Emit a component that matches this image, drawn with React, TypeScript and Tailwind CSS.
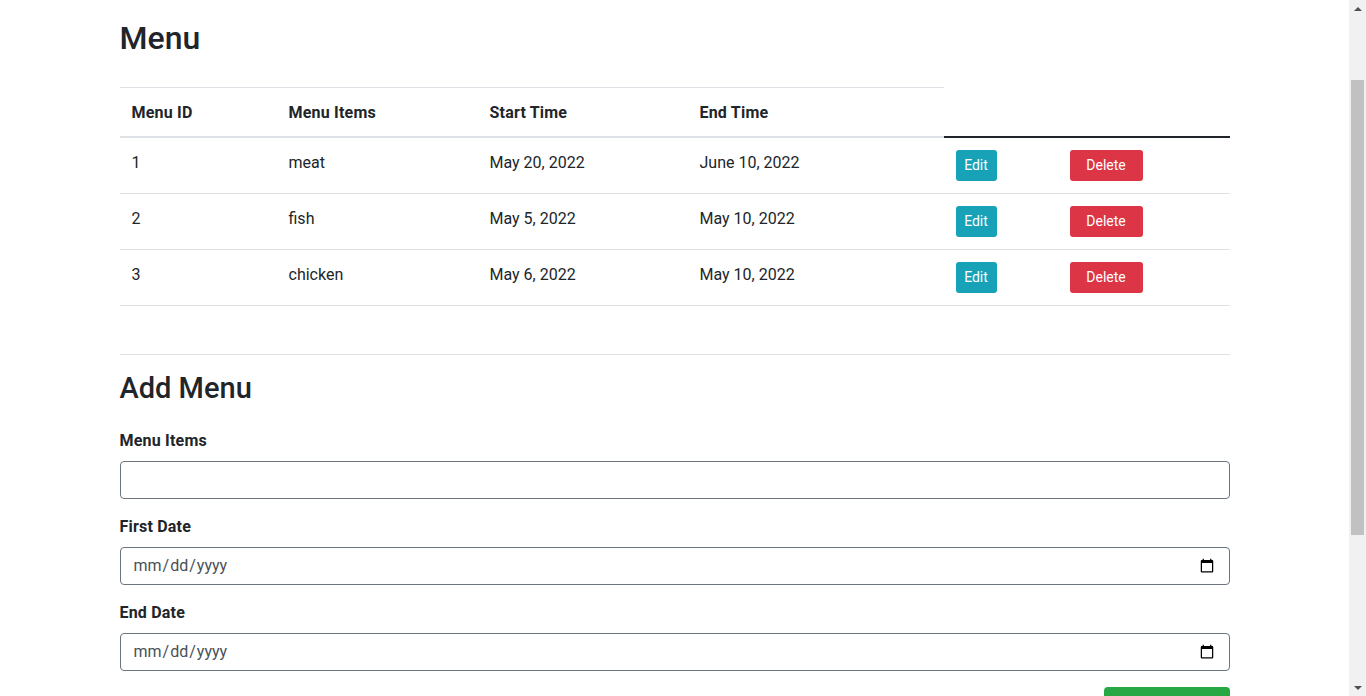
const MENUS = [
  { id: 1, item: "meat", start: "May 20, 2022", end: "June 10, 2022" },
  { id: 2, item: "fish", start: "May 5, 2022", end: "May 10, 2022" },
  { id: 3, item: "chicken", start: "May 6, 2022", end: "May 10, 2022" },
];

function Scrollbar() {
  return (
    <div className="flex h-full w-[17px] shrink-0 flex-col items-center bg-[#f1f1f1]">
      <div className="flex h-[17px] items-center justify-center">
        <div className="h-0 w-0 border-x-[4px] border-b-[4px] border-x-transparent border-b-[#505050]" />
      </div>
      <div className="h-[63px]" />
      <div className="h-[455px] w-[13px] bg-[#c1c1c1]" />
      <div className="flex-1" />
      <div className="flex h-[17px] items-center justify-center">
        <div className="h-0 w-0 border-x-[4px] border-t-[4px] border-x-transparent border-t-[#505050]" />
      </div>
    </div>
  );
}

export default function App() {
  const cell = "border-b border-[#dee2e6] px-3 pt-[13px] pb-[11px] align-top";

  return (
    <div className="flex h-screen overflow-hidden bg-white text-[#212529] font-['Segoe_UI',Roboto,'Liberation_Sans',sans-serif] text-[16px] leading-[1.5]">
      <div className="min-w-0 flex-1 overflow-hidden">
        <div className="mx-auto max-w-[1140px] px-[15px]">
          <h2 className="mt-[19px] mb-[30px] text-[32px] font-medium leading-[1.2]">Menu</h2>

          <table className="w-full table-fixed border-collapse">
            <colgroup>
              <col className="w-[157px]" />
              <col className="w-[201px]" />
              <col className="w-[210px]" />
              <col className="w-[256px]" />
              <col className="w-[114px]" />
              <col className="w-[172px]" />
            </colgroup>
            <thead>
              <tr>
                {["Menu ID", "Menu Items", "Start Time", "End Time"].map((h) => (
                  <th
                    key={h}
                    className="border-t border-b-2 border-t-[#dee2e6] border-b-[#dee2e6] px-3 pt-[13px] pb-[11px] text-left font-bold tracking-[0.2px]"
                  >
                    {h}
                  </th>
                ))}
              </tr>
            </thead>
            <tbody>
              {MENUS.map((m, i) => (
                <tr key={m.id}>
                  <td className={cell}>{m.id}</td>
                  <td className={cell}>{m.item}</td>
                  <td className={cell}>{m.start}</td>
                  <td className={cell}>{m.end}</td>
                  <td
                    className={`border-b border-b-[#dee2e6] p-3 align-top ${
                      i === 0 ? "border-t-2 border-t-[#212529]" : ""
                    }`}
                  >
                    <button className="h-[31px] w-[41px] rounded-[3px] bg-[#17a2b8] text-[14px] text-white">
                      Edit
                    </button>
                  </td>
                  <td
                    className={`border-b border-b-[#dee2e6] p-3 align-top ${
                      i === 0 ? "border-t-2 border-t-[#212529]" : ""
                    }`}
                  >
                    <button className="h-[31px] w-[73px] rounded-[3px] bg-[#dc3545] text-[14px] text-white">
                      Delete
                    </button>
                  </td>
                </tr>
              ))}
            </tbody>
          </table>

          <hr className="mt-[48px] mb-4 border-t border-[#dfe0e2]" />

          <h3 className="mb-[23px] text-[29px] font-medium leading-[1.2]">Add Menu</h3>

          <form onSubmit={(e) => e.preventDefault()}>
            <div className="mb-4">
              <label className="mb-2 block font-bold tracking-[0.2px]">Menu Items</label>
              <input
                type="text"
                className="block h-[38px] w-full rounded-[4px] border border-[#6c757d] px-3 outline-none"
              />
            </div>
            <div className="mb-4">
              <label className="mb-2 block font-bold tracking-[0.2px]">First Date</label>
              <input
                type="date"
                className="block h-[38px] w-full rounded-[4px] border border-[#6c757d] px-3 text-[#495057] outline-none"
              />
            </div>
            <div className="mb-4">
              <label className="mb-2 block font-bold tracking-[0.2px]">End Date</label>
              <input
                type="date"
                className="block h-[38px] w-full rounded-[4px] border border-[#6c757d] px-3 text-[#495057] outline-none"
              />
            </div>
            <div className="flex justify-end">
              <button
                type="submit"
                className="h-[38px] w-[126px] rounded-[4px] bg-[#28a745] text-white"
              >
                Add Menu
              </button>
            </div>
          </form>
        </div>
      </div>
      <Scrollbar />
    </div>
  );
}
